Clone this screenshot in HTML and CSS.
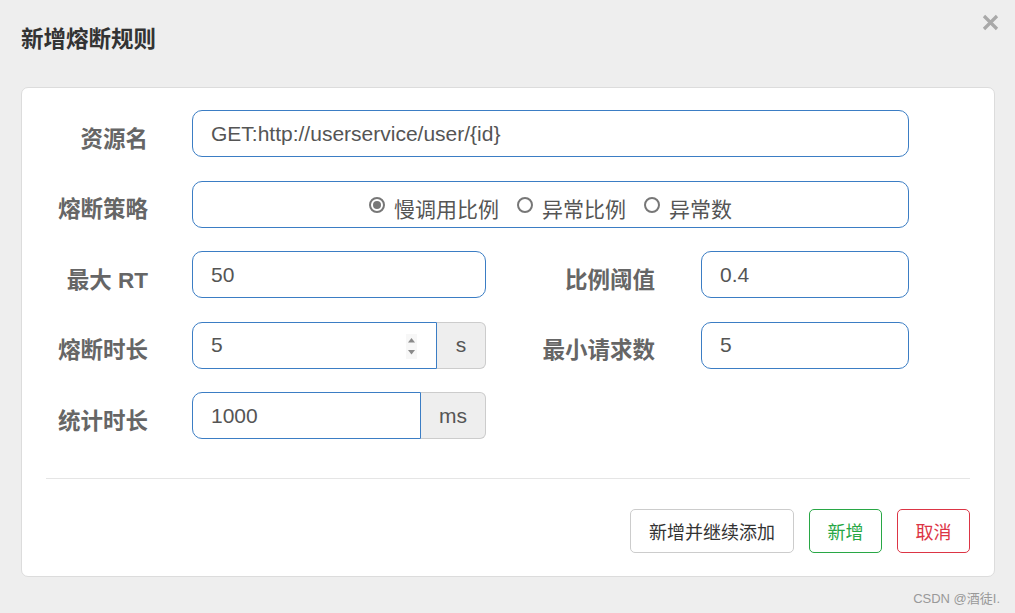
FILE: index.html
```html
<!DOCTYPE html>
<html lang="zh-CN">
  <head>
    <meta charset="UTF-8" />
    <meta name="viewport" content="width=device-width, initial-scale=1.0" />
    <title>新增熔断规则</title>
    <link rel="stylesheet" href="styles.css">
  </head>
  <body>
    <div class="dialog">
      <div class="dialog-header">
        <h2 class="dialog-title">新增熔断规则</h2>
        <button class="close-btn" aria-label="关闭">
          <svg width="17" height="17" viewBox="0 0 17 17">
            <path d="M2 2 L15 15 M15 2 L2 15" stroke="#a9a9a9" stroke-width="3.2" stroke-linecap="butt" />
          </svg>
        </button>
      </div>

      <div class="card">
        <div class="form">
          <div class="row">
            <label class="label">资源名</label>
            <div class="field wide">GET:http://userservice/user/{id}</div>
          </div>

          <div class="row">
            <label class="label">熔断策略</label>
            <div class="field wide radios">
              <span class="radio checked"></span><span class="radio-text">慢调用比例</span>
              <span class="radio"></span><span class="radio-text">异常比例</span>
              <span class="radio"></span><span class="radio-text">异常数</span>
            </div>
          </div>

          <div class="row">
            <label class="label">最大 RT</label>
            <div class="field half">50</div>
            <label class="label label-right">比例阈值</label>
            <div class="field small">0.4</div>
          </div>

          <div class="row">
            <label class="label">熔断时长</label>
            <div class="group half">
              <div class="field grouped spin">
                <span>5</span>
                <svg class="spinner" width="11" height="25" viewBox="0 0 11 25">
                  <rect x="0" y="0" width="11" height="25" fill="#f7f7f7" />
                  <path d="M2 8.5 L5.5 4 L9 8.5 Z" fill="#8a8a8a" />
                  <path d="M2 16 L5.5 20.5 L9 16 Z" fill="#8a8a8a" />
                </svg>
              </div>
              <span class="addon addon-s">s</span>
            </div>
            <label class="label label-right">最小请求数</label>
            <div class="field small">5</div>
          </div>

          <div class="row">
            <label class="label">统计时长</label>
            <div class="group half">
              <div class="field grouped">1000</div>
              <span class="addon addon-ms">ms</span>
            </div>
          </div>
        </div>

        <hr class="divider" />

        <div class="actions">
          <button class="btn btn-default">新增并继续添加</button>
          <button class="btn btn-success">新增</button>
          <button class="btn btn-danger">取消</button>
        </div>
      </div>

      <div class="watermark">CSDN @酒徒I.</div>
    </div>
  </body>
</html>
```

FILE: styles.css
```css
body {
  margin: 0;
  font-family: "Liberation Sans", "Noto Sans CJK SC", sans-serif;
  background-color: #eeeeee;
  color: #555;
}

.dialog {
  width: 1015px;
  height: 613px;
  display: flex;
  flex-direction: column;
}

.dialog-header {
  height: 87px;
  display: flex;
  justify-content: space-between;
  align-items: flex-start;
  padding-left: 21px;
  box-sizing: border-box;
}

.dialog-title {
  margin: 25px 0 0;
  font-size: 22.5px;
  font-weight: bold;
  color: #333;
  line-height: 30px;
}

.close-btn {
  margin: 14px 16px 0 0;
  padding: 0;
  border: none;
  background: none;
  cursor: pointer;
  line-height: 0;
}

.card {
  margin-left: 21px;
  width: 974px;
  height: 490px;
  box-sizing: border-box;
  background: white;
  border: 1px solid #dcdcdc;
  border-radius: 7px;
  padding: 22px 0 0;
}

.form {
  display: flex;
  flex-direction: column;
  gap: 23.5px;
}

.row {
  display: flex;
  align-items: center;
  height: 47px;
}

.label {
  width: 126px;
  margin-right: 44px;
  padding-top: 6px;
  text-align: right;
  font-size: 22.5px;
  font-weight: bold;
  color: #666;
  flex-shrink: 0;
}

.label-right {
  width: 169px;
  margin-right: 46px;
}

.field {
  height: 47px;
  box-sizing: border-box;
  border: 1px solid #3b7dc4;
  border-radius: 10px;
  padding: 0 18px;
  display: flex;
  align-items: center;
  font-size: 21px;
  color: #555;
  background: white;
}

.wide {
  width: 717px;
}

.half {
  width: 294px;
}

.small {
  width: 208px;
}

.radios {
  justify-content: center;
  padding-top: 8px;
  font-size: 21px;
}

.radio {
  width: 12px;
  height: 12px;
  border: 2px solid #777;
  border-radius: 50%;
  margin-right: 9px;
  position: relative;
  flex-shrink: 0;
  margin-top: -6px;
}

.radio.checked::after {
  content: "";
  position: absolute;
  left: 2px;
  top: 2px;
  width: 8px;
  height: 8px;
  border-radius: 50%;
  background: #777;
}

.radio-text {
  margin-right: 18px;
}

.radio-text:last-child {
  margin-right: 0;
}

.group {
  display: flex;
  height: 47px;
}

.grouped {
  flex: 1;
  border-radius: 10px 0 0 10px;
}

.spin {
  justify-content: space-between;
  padding-right: 19px;
}

.spinner {
  margin-top: 2px;
}

.addon {
  box-sizing: border-box;
  height: 47px;
  display: flex;
  align-items: center;
  justify-content: center;
  background: #eeeeee;
  border: 1px solid #cccccc;
  border-left: none;
  border-radius: 0 6px 6px 0;
  font-size: 21px;
  color: #555;
}

.addon-s {
  width: 49px;
}

.addon-ms {
  width: 65px;
}

.divider {
  margin: 39px 24px 0;
  border: none;
  border-top: 1px solid #e5e5e5;
}

.actions {
  display: flex;
  justify-content: flex-end;
  gap: 15px;
  margin: 30px 24px 0;
}

.btn {
  height: 44px;
  padding: 0 18px;
  background: white;
  border-radius: 5px;
  font-family: inherit;
  font-size: 18px;
  cursor: pointer;
}

.btn-default {
  border: 1px solid #cccccc;
  color: #333;
}

.btn-success {
  width: 73px;
  padding: 0;
  border: 1px solid #28a745;
  color: #28a745;
}

.btn-danger {
  width: 73px;
  padding: 0;
  border: 1px solid #dc3545;
  color: #dc3545;
}

.watermark {
  align-self: flex-end;
  margin: 11px 15px 0 0;
  font-size: 13px;
  color: #999;
}
```
